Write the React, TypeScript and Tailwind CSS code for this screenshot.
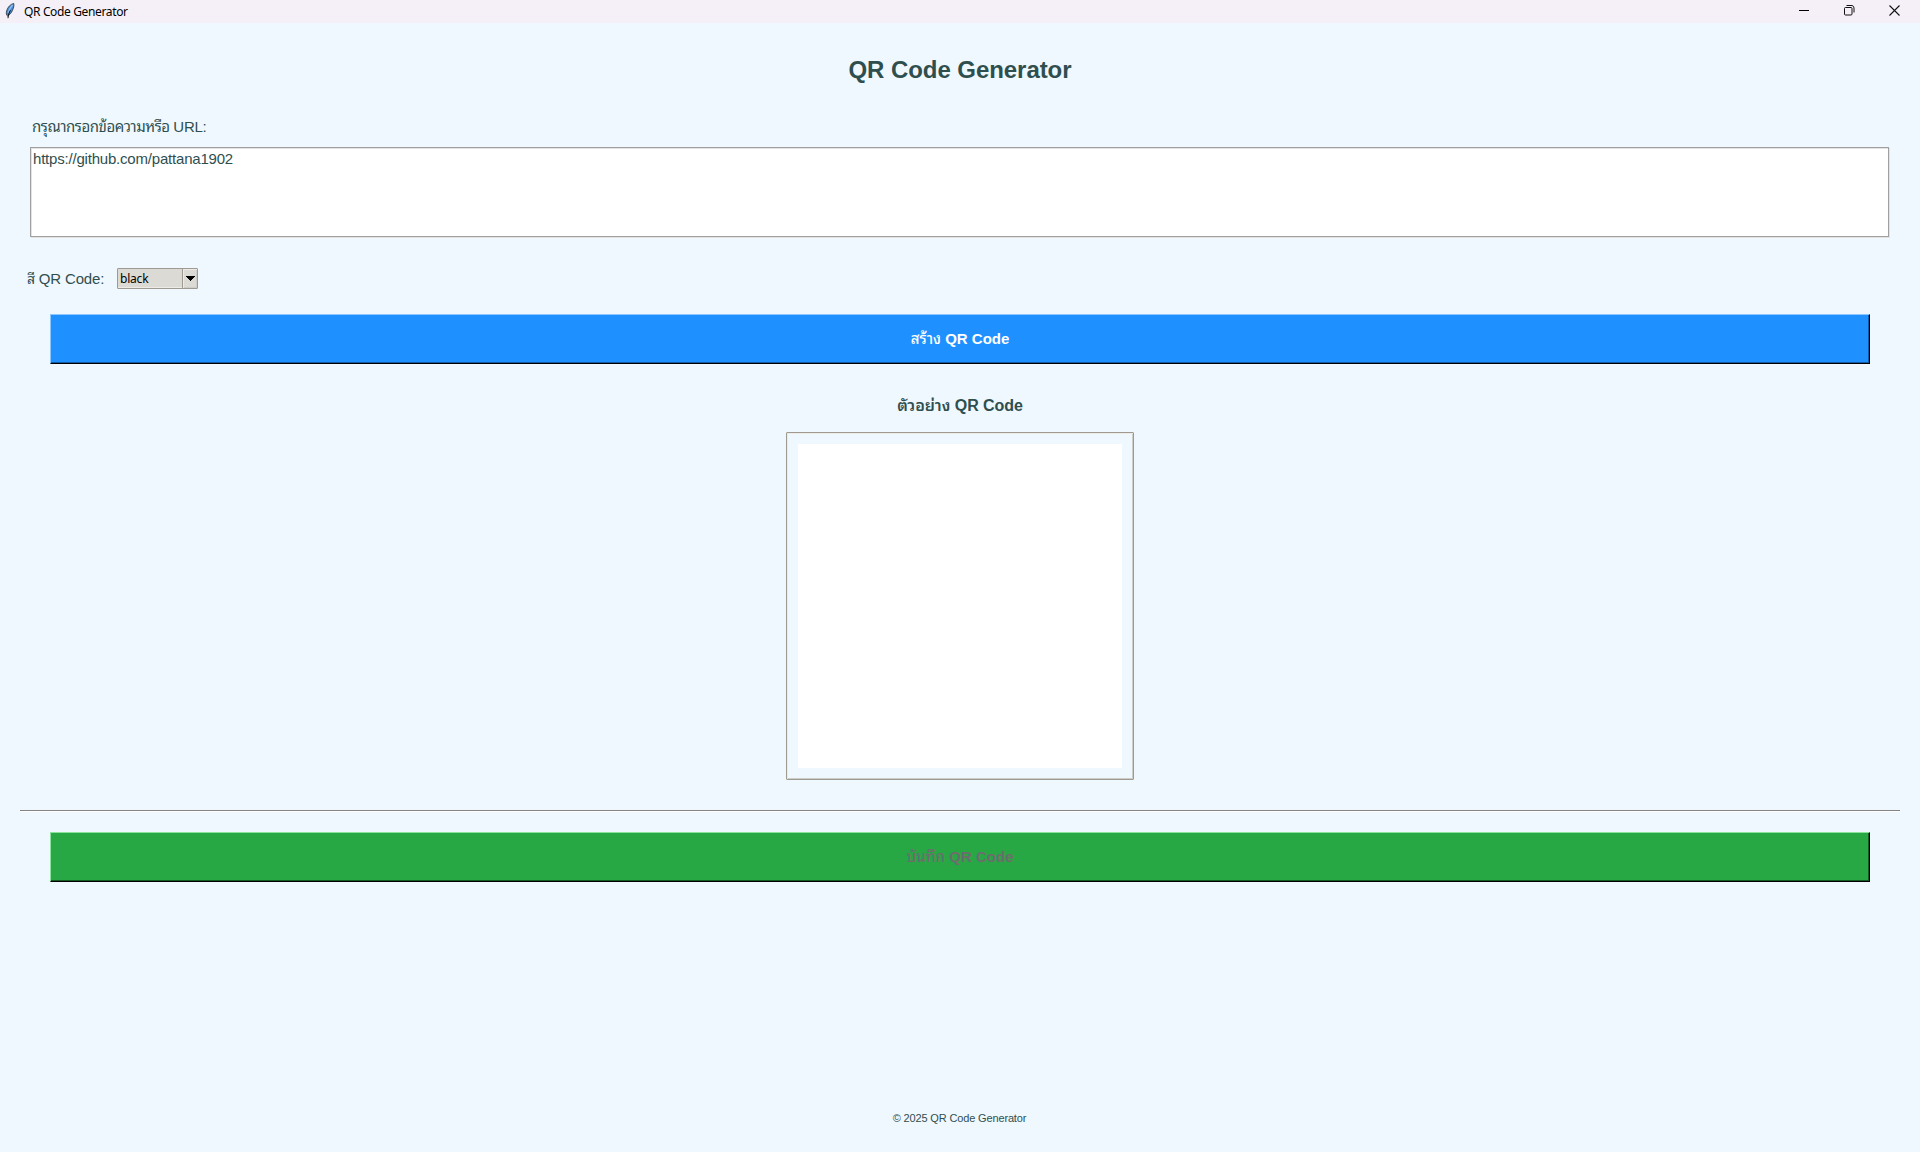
import React from "react";

const appFont = "font-['Liberation_Sans','Noto_Sans_Thai_Looped','Loma','Noto_Sans_Thai','Noto_Sans',sans-serif]";

function Feather() {
  return (
    <svg className="ml-[5px] mt-[3px] h-4 w-[11px] shrink-0" viewBox="0 0 11 16">
      <path d="M8.7.4 C5.5 1.2 2.7 4 1.6 7.8 C1 10.3 1.3 12.3 2.6 13 C4.6 11.9 6.5 9.8 7.3 7.7 C8.5 5.3 9.3 2.6 8.7.4Z" fill="#4a8ad0" stroke="#2a3340" strokeWidth=".8" />
      <path d="M7.6 2 C5.6 4 4 6.8 3.3 9.6" stroke="#8fc0f4" strokeWidth="1.5" fill="none" />
      <path d="M5.4 7.2 C4.2 9.6 3.3 11.8 3 15.2" stroke="#111" strokeWidth="1" fill="none" />
    </svg>
  );
}

function TitleBar() {
  return (
    <header className="flex h-[23px] shrink-0 items-start bg-[#f5f0f7] text-black">
      <Feather />
      <span className="ml-2 mt-[3px] whitespace-nowrap font-['Noto_Sans',sans-serif] text-[12px] leading-[18px] tracking-[-0.36px]">
        QR Code Generator
      </span>
      <div className="ml-auto mr-5 mt-[5px] flex gap-[34px]">
        <svg className="h-[11px] w-[12px]" viewBox="0 0 12 11" shapeRendering="crispEdges">
          <path d="M1 5.5h10" stroke="#000" />
        </svg>
        <svg className="h-[11px] w-[11px]" viewBox="0 0 11 11" fill="none" stroke="#111">
          <rect x=".5" y="2.5" width="7.5" height="7.5" rx="1" />
          <path d="M2.5.5H8A2.5 2.5 0 0 1 10 3V7.5" />
        </svg>
        <svg className="h-[11px] w-[11px]" viewBox="0 0 11 11">
          <path d="M.5.5l10 10M10.5.5l-10 10" stroke="#111" strokeWidth="1.1" />
        </svg>
      </div>
    </header>
  );
}

export default function App() {
  return (
    <div className={`flex h-[1152px] w-[1920px] flex-col overflow-hidden bg-[#f0f8ff] text-[#2f4f4f] ${appFont}`}>
      <TitleBar />
      <h1 className="mt-[31px] text-center text-[24px] font-bold leading-8 tracking-[-0.06px]">QR Code Generator</h1>

      <label className="ml-8 mt-[31px] h-5 whitespace-nowrap text-[15px] leading-5 tracking-[-0.45px]">
        กรุณากรอกข้อความหรือ <span className="tracking-[-0.25px]">URL:</span>
      </label>
      <div className="ml-[30px] mr-[31px] mt-[10px] h-[90px] border border-[#a0a0a0] bg-white pl-[2px] pt-px text-[15px] leading-5 tracking-[-0.2px] shadow-[inset_1px_1px_#e3e3e3,1px_1px_#e3e3e3]">
        https://github.com/pattana1902
      </div>

      <div className="ml-[27px] mt-[31px] flex h-[21px] items-center">
        <span className="w-[90px] whitespace-nowrap text-[15px] leading-5 tracking-[-0.18px]">
          <span className="text-[14px]">สี</span> QR Code:
        </span>
        <div className="flex h-[21px] w-[81px] rounded-[1px] border border-[#9e9a91] bg-[#dcdad5] text-black shadow-[inset_0_-1px_#eeebe7]">
          <span className="flex-1 pl-[2px] font-['Noto_Sans',sans-serif] text-[12px] leading-[19px] tracking-[-0.2px]">black</span>
          <span className="flex w-[15px] items-center justify-center border-l border-[#9e9a91] shadow-[inset_1px_1px_#eeebe7,inset_-1px_-1px_#cfcdc8]">
            <svg className="h-[5px] w-[9px]" viewBox="0 0 9 5" shapeRendering="crispEdges"><path d="M0 0h9L4.5 5z" /></svg>
          </span>
        </div>
      </div>

      <button className="mx-[50px] mt-[25px] h-[50px] border-b border-l border-r border-t border-b-black border-l-[#8ec7ff] border-r-black border-t-[#8ec7ff] bg-[#1e90ff] text-[15px] font-bold leading-5 text-white shadow-[inset_-1px_-1px_#0f5aa5]">
        <span className="font-medium">สร้าง</span> QR Code
      </button>

      <h2 className="mt-8 text-center text-[16px] font-bold leading-5 tracking-[-0.05px]">
        <span className="font-semibold">ตัวอย่าง</span> QR Code
      </h2>

      <div className="mt-4 h-[348px] w-[348px] self-center rounded-[1px] border border-[#9e9a91] p-[11px] shadow-[inset_1px_1px_#eeebe7,inset_-1px_-1px_#cfcdc8]">
        <div className="h-[324px] w-[324px] bg-white" />
      </div>

      <div className="mx-5 mt-[30px] h-[2px] border-b border-t border-b-white border-t-[#848484]" />

      <button className="mx-[50px] mt-5 h-[50px] border-b border-l border-r border-t border-b-black border-l-[#8be29d] border-r-black border-t-[#8be29d] bg-[#28a745] text-[15px] font-bold leading-5 text-[#6d6d6d] shadow-[inset_-1px_-1px_#145a23]">
        <span className="font-medium">บันทึก</span> QR Code
      </button>

      <footer className="mt-auto pb-[26px] pr-px text-center text-[11px] leading-4 tracking-[-0.15px]">© 2025 QR Code Generator</footer>
    </div>
  );
}
